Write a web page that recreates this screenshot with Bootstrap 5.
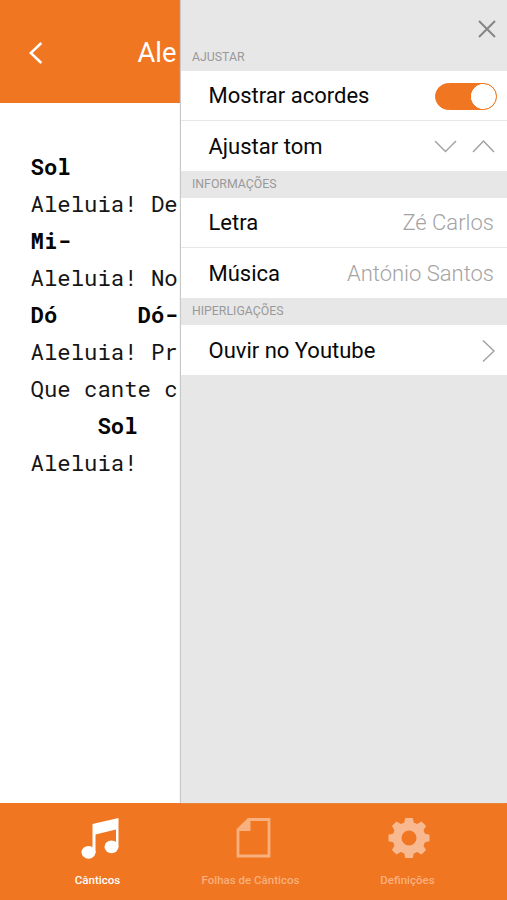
<!DOCTYPE html>
<html lang="pt">
<head>
<meta charset="utf-8">
<meta name="viewport" content="width=device-width, initial-scale=1">
<title>Cânticos</title>
<link rel="stylesheet" href="https://cdn.jsdelivr.net/npm/bootstrap@5.3.0/dist/css/bootstrap.min.css">
<style>
body{font-family:Roboto,"Liberation Sans",sans-serif;height:900px;background:#fff;color:#080808}
.viewport-row{height:803px}
.song-pane{width:178px}
.side-pane{margin-left:3px;background:#e7e7e7;box-shadow:-1px 0 1px #c8c8c8;min-width:0}
.top-bar{height:103px;width:179.5px;background:#f07621;padding:2px 0 0 28.5px;color:#fff}
.top-title{font-size:27.3px;line-height:32px;margin-left:94px}
.lyrics{font:22.3px/37px "Roboto Mono","DejaVu Sans Mono",monospace;margin:45px 0 0 30.5px;color:#151515}
.lyrics b{color:#050505}
.close-row{height:44px;padding:19px 10px 0 0}
.side-label{height:27px;padding-left:11px;font-size:12.3px;line-height:27px;color:#999}
.option-list .list-group-item{height:50px;padding:1px 13px 0 27.5px;font-size:22px;line-height:28px;border-color:#e7e7e7;color:#080808;border-radius:0}
.option-list .muted-value{color:#a4a4a4;font-weight:300}
.option-list .list-group-item:first-child:not(:last-child){height:50px}
.form-switch .form-check-input.chords{width:62px;height:27px;margin:0 -2px 0 0;border:1px solid #f07621;background-color:#f07621;background-size:25px 25px;--bs-form-switch-bg:none;background-image:radial-gradient(circle,#fff 12.3px,transparent 12.8px);box-shadow:none}
.tab-bar{height:97px;background:#f07621;padding:0 22px 0 20px}
.tab-item{color:#fff;font-weight:500;font-size:11.5px;line-height:14px;padding-top:14px}
.tab-item.dim{color:#f8b07e}
.tab-item svg{margin-bottom:14px}
.tab-item.sheets{padding-right:4px}
</style>
<script src="https://cdn.jsdelivr.net/npm/bootstrap@5.3.0/dist/js/bootstrap.bundle.min.js"></script>
</head>
<body class="overflow-hidden">
<div class="viewport-row d-flex">
  <main class="song-pane flex-shrink-0">
    <header class="top-bar d-flex align-items-center overflow-hidden">
      <svg width="15" height="24" viewBox="0 0 15 24" fill="none" stroke="#fff" stroke-width="2.5"><path d="M12.3 2 1.8 12l10.500 10"/></svg>
      <span class="top-title">Ale</span>
    </header>
    <pre class="lyrics overflow-hidden"><b>Sol</b>
Aleluia! De
<b>Mi-</b>
Aleluia! No
<b>Dó      Dó-</b>
Aleluia! Pr
Que cante c
<b>     Sol</b>
Aleluia!</pre>
  </main>
  <aside class="side-pane flex-grow-1">
    <div class="close-row d-flex justify-content-end">
      <svg width="20" height="20" viewBox="0 0 20 20" stroke="#858585" stroke-width="2"><path d="m2 2 16 16M18 2 2 18"/></svg>
    </div>
    <div class="side-label">AJUSTAR</div>
    <ul class="option-list list-group list-group-flush">
      <li class="list-group-item d-flex align-items-center justify-content-between pe-2">Mostrar acordes
        <span class="form-switch p-0 d-flex me-1"><input class="form-check-input chords" type="checkbox" role="switch" checked aria-label="Mostrar acordes"></span></li>
      <li class="list-group-item d-flex align-items-center justify-content-between pe-2">Ajustar tom
        <span class="d-flex me-1">
          <svg width="61" height="15" viewBox="0 0 61 15" fill="none" stroke="#a0a0a0" stroke-width="1.400"><path d="m1 2 10.500 10.500L22 2M39 13 49.500 2 60 13"/></svg>
        </span></li>
    </ul>
    <div class="side-label">INFORMAÇÕES</div>
    <ul class="option-list list-group list-group-flush">
      <li class="list-group-item d-flex align-items-center justify-content-between">Letra <span class="muted-value">Zé Carlos</span></li>
      <li class="list-group-item d-flex align-items-center justify-content-between">Música <span class="muted-value">António Santos</span></li>
    </ul>
    <div class="side-label">HIPERLIGAÇÕES</div>
    <ul class="option-list list-group list-group-flush">
      <li class="list-group-item d-flex align-items-center justify-content-between pe-2">Ouvir no Youtube
        <svg class="me-1" width="13" height="24" viewBox="0 0 13 24" fill="none" stroke="#a0a0a0" stroke-width="1.400"><path d="m1 1.500 11 10.500L1 22.500"/></svg></li>
    </ul>
  </aside>
</div>
<nav class="tab-bar d-flex">
  <div class="tab-item col-4 d-flex flex-column align-items-center">
    <svg width="42" height="42" viewBox="-1.5 0 42 42" fill="#fff" class="ms-1"><path d="M13 7 39 1v29h-2.500V12.500L16 17.500V36h-3z"/><ellipse cx="9" cy="35.300" rx="7" ry="6.400"/><ellipse cx="32" cy="29.800" rx="7" ry="6.400"/></svg>
    Cânticos
  </div>
  <div class="tab-item dim sheets col-4 d-flex flex-column align-items-center">
    <svg width="42" height="42" viewBox="-0.5 0 42 42" class="ms-2"><path d="M15 2.500h20.500V39h-31V12.500z" fill="none" stroke="#f8b07e" stroke-width="2.800"/><path d="M14.500 1.500H17v12.500H4.500V12z" fill="#f8b07e"/></svg>
    Folhas de Cânticos
  </div>
  <div class="tab-item dim col-4 d-flex flex-column align-items-center">
    <svg width="42" height="42" viewBox="0 0 42 42" class="ms-1" fill="#f8b990"><path fill-rule="evenodd" d="M17.200 1h7.600l.9 4.500 3.500 1.500 4.300-2.600 4.600 4.600-2.600 4.300 1.400 3.500 4.600.9v6.600l-4.600.9-1.400 3.500 2.600 4.300-4.600 4.600-4.300-2.600-3.500 1.500-.9 4.500h-7.600l-.9-4.500-3.500-1.500-4.300 2.600L3.900 33l2.600-4.300-1.400-3.500-4.600-.9v-6.600l4.600-.9 1.400-3.500L3.900 9l4.600-4.600L12.800 7l3.500-1.500zM21 13.500a7.500 7.500 0 1 0 0 15 7.500 7.500 0 0 0 0-15z"/></svg>
    Definições
  </div>
</nav>
</body>
</html>
